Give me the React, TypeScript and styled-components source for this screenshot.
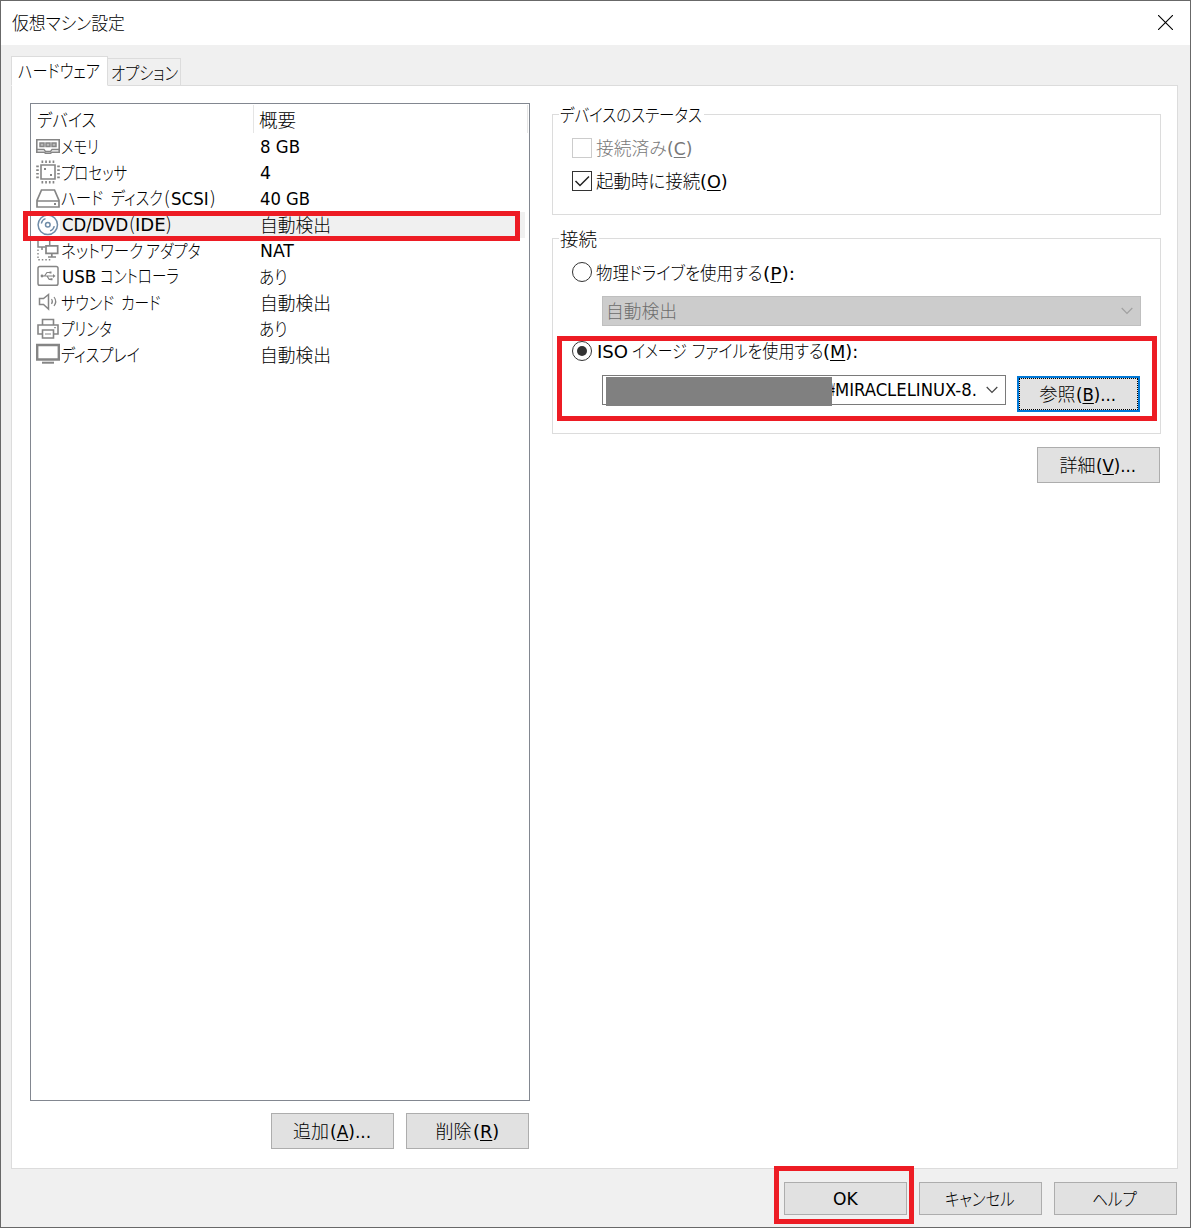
import React, { ReactNode, useLayoutEffect, useRef, useState } from 'react';
import styled, { createGlobalStyle } from 'styled-components';

const Global = createGlobalStyle`
  * { box-sizing: border-box; }
  html, body { margin: 0; padding: 0; background: #fff; }
`;

const JA = `'Noto Sans CJK JP', sans-serif`;
const LATIN = `'DejaVu Sans Condensed', 'DejaVu Sans', 'Noto Sans CJK JP', sans-serif`;

/* ---------- text ---------- */
const FitBox = styled.span<{ $w: number; $x: number; $latin?: boolean; $size?: number }>`
  display: inline-block;
  flex: none;
  width: ${p => p.$w}px;
  margin-left: ${p => p.$x}px;
  white-space: pre;
  font-family: ${p => (p.$latin ? LATIN : JA)};
  font-weight: ${p => (p.$latin ? 400 : 300)};
  font-size: ${p => p.$size ?? (p.$latin ? 17.5 : 18)}px;
  font-feature-settings: 'palt' 1;
`;
const FitInner = styled.span`
  display: inline-block;
  transform-origin: 0 50%;
  u { text-decoration-thickness: 1px; text-underline-offset: 2px; text-decoration-skip-ink: none; }
`;

type RunProps = { w: number; x?: number; latin?: boolean; size?: number; children: ReactNode };

/* One run of text, condensed or widened to the given advance. */
function Run({ w, x = 0, latin, size, children }: RunProps) {
  const ref = useRef<HTMLSpanElement>(null);
  const [scale, setScale] = useState(1);
  useLayoutEffect(() => {
    if (ref.current) setScale(w / ref.current.offsetWidth);
  }, [w, children]);
  return (
    <FitBox $w={w} $x={x} $latin={latin} $size={size}>
      <FitInner ref={ref} style={{ transform: `scaleX(${scale})` }}>{children}</FitInner>
    </FitBox>
  );
}

const Line = styled.span<{ $h: number; $up?: number }>`
  display: flex;
  align-items: baseline;
  height: ${p => p.$h}px;
  line-height: ${p => p.$h}px;
  transform: translateY(${p => -(p.$up ?? 1)}px);
`;

/* ---------- window ---------- */
const Window = styled.div`
  position: relative;
  display: flex;
  flex-direction: column;
  width: 1191px;
  height: 1228px;
  border: 1px solid #686868;
  background: #f0f0f0;
  color: #000;
  overflow: hidden;
`;
const TitleBar = styled.header`
  display: flex;
  justify-content: space-between;
  align-items: center;
  height: 44px;
  padding: 0 17px 0 11px;
  background: #fff;
`;
const CloseIcon = styled.svg`
  width: 15px;
  height: 15px;
  margin-bottom: 1px;
  stroke: #000;
  stroke-width: 1.1;
`;
const Tabs = styled.nav`
  display: flex;
  align-items: flex-end;
  height: 41px;
  padding-left: 10px;
  margin-bottom: -1px;
`;
const Tab = styled.div<{ $active?: boolean; $w: number }>`
  position: relative;
  z-index: ${p => (p.$active ? 1 : 0)};
  width: ${p => p.$w}px;
  height: ${p => (p.$active ? 30 : 28)}px;
  padding: ${p => (p.$active ? '0 0 0 6px' : '0 0 0 3px')};
  border: 1px solid #dcdcdc;
  border-bottom-color: ${p => (p.$active ? '#fff' : '#dcdcdc')};
  border-left-width: ${p => (p.$active ? 1 : 0)}px;
  background: ${p => (p.$active ? '#fff' : '#f0f0f0')};
`;
const Page = styled.main`
  display: flex;
  gap: 22px;
  width: 1167px;
  height: 1084px;
  margin-left: 10px;
  padding: 17px 16px 0 18px;
  border: 1px solid #dcdcdc;
  background: #fff;
`;
const Left = styled.section`
  width: 500px;
`;
const List = styled.div`
  height: 998px;
  border: 1px solid #828790;
`;
const HeaderRow = styled.div`
  display: grid;
  grid-template-columns: 223px 1fr;
  height: 30px;
  padding: 1px 1px 0 0;
`;
const HeadCell = styled.div<{ $pad: number }>`
  height: 28px;
  padding-left: ${p => p.$pad}px;
  border-right: 1px solid #e5e5e5;
`;
const Row = styled.div`
  display: grid;
  grid-template-columns: 24px 199px 1fr;
  height: 26px;
  padding: 0 4px 0 5px;
`;
const Cell = styled.div<{ $on?: boolean }>`
  height: 26px;
  padding-left: 1px;
  background: ${p => (p.$on ? '#f0f0f0' : 'transparent')};
`;
const Icon = styled.svg`
  display: block;
  width: 24px;
  height: 26px;
  fill: none;
  stroke: #858585;
  stroke-width: 2;
`;
const Buttons = styled.div<{ $top: number; $right?: number }>`
  display: flex;
  justify-content: flex-end;
  gap: 12px;
  margin-top: ${p => p.$top}px;
  padding-right: ${p => p.$right ?? 1}px;
`;
const Button = styled.button<{ $h?: number; $focus?: boolean }>`
  display: flex;
  justify-content: center;
  align-items: center;
  flex: none;
  width: 123px;
  height: ${p => p.$h ?? 36}px;
  padding: 0 2px 0 0;
  border: ${p => (p.$focus ? '2px solid #0078d7' : '1px solid #adadad')};
  outline: ${p => (p.$focus ? '1px dotted #000' : 'none')};
  outline-offset: -3px;
  background: #e1e1e1;
  color: #000;
`;
const Right = styled.section`
  width: 609px;
`;
const Group = styled.section<{ $h: number; $top: number }>`
  height: ${p => p.$h}px;
  margin-top: ${p => p.$top}px;
  border: 1px solid #dcdcdc;
`;
const Legend = styled.div<{ $w: number }>`
  width: ${p => p.$w}px;
  height: 24px;
  margin: -12px 0 0 6px;
  background: #fff;
`;
const Option = styled.div<{ $top: number; $off?: boolean }>`
  display: flex;
  align-items: center;
  gap: 4px;
  height: 24px;
  margin: ${p => p.$top}px 0 0 19px;
  color: ${p => (p.$off ? '#787878' : '#000')};
`;
const Check = styled.span<{ $off?: boolean }>`
  display: flex;
  width: 20px;
  height: 20px;
  border: 1px solid ${p => (p.$off ? '#ccc' : '#333')};
  background: #fff;
`;
const Radio = styled.span<{ $on?: boolean }>`
  display: flex;
  align-items: center;
  justify-content: center;
  width: 20px;
  height: 20px;
  border: 1px solid #333;
  border-radius: 50%;
  background: #fff;
  &::after {
    content: '';
    width: ${p => (p.$on ? 10 : 0)}px;
    height: ${p => (p.$on ? 10 : 0)}px;
    border-radius: 50%;
    background: #333;
  }
`;
const Combo = styled.div<{ $w: number; $off?: boolean }>`
  display: flex;
  justify-content: space-between;
  align-items: center;
  width: ${p => p.$w}px;
  height: 30px;
  padding: 0 7px 0 3px;
  border: 1px solid ${p => (p.$off ? '#bfbfbf' : '#7a7a7a')};
  background: ${p => (p.$off ? '#ccc' : '#fff')};
  color: ${p => (p.$off ? '#6d6d6d' : '#000')};
`;
const ComboRow = styled.div<{ $top: number }>`
  display: flex;
  gap: 11px;
  height: 37px;
  margin: ${p => p.$top}px 0 0 49px;
`;
const BrowseSlot = styled.div`
  padding-top: 1px;
`;
const PathText = styled.div`
  display: flex;
  width: 372px;
  padding-left: 225px;
  overflow: hidden;
`;
const Mask = styled.div`
  position: absolute;
  left: 605px;
  top: 376px;
  width: 226px;
  height: 29px;
  background: #808080;
`;
const Callout = styled.div<{ $l: number; $t: number; $w: number; $h: number }>`
  position: absolute;
  z-index: 2;
  left: ${p => p.$l - 1}px;
  top: ${p => p.$t - 1}px;
  width: ${p => p.$w}px;
  height: ${p => p.$h}px;
  border: 5px solid #ed1c24;
  pointer-events: none;
`;

/* ---------- icons ---------- */
const MemoryIcon = () => (
  <Icon viewBox="0 0 24 26">
    <path d="M.8 5.800h22.400v12.400H16l-1.500 1h-5L8 18.200H.8z" strokeWidth="1.600" />
    <path d="M1 15.500h7l1.500 2h5l1.500-2h7" strokeWidth="1.300" />
    <path d="M4 9h4v3.500H4zM10 9h4v3.500h-4zM16 9h4v3.500h-4z" fill="#bbb" strokeWidth="1.500" />
  </Icon>
);
const CpuIcon = () => (
  <Icon viewBox="0 1 24 26">
    <path d="M5 6h14v14H5z" strokeWidth="1.600" />
    <path d="M5.500 2.700h13M5.500 23.300h13" strokeDasharray="1.700 2" strokeWidth="2.600" />
    <path d="M1.500 6.500v13M22.500 6.500v13" strokeDasharray="1.700 2" strokeWidth="2.600" />
    <path d="M8 9h2v2H8zM14 15h2v2h-2z" fill="#858585" stroke="none" />
  </Icon>
);
const DiskIcon = () => (
  <Icon viewBox="0 1 24 26">
    <path d="M5.500 5h13L23 15.500V22H1v-6.500zM1 16h22" strokeWidth="1.700" />
    <path d="M18 19h2" />
  </Icon>
);
const DiscIcon = () => (
  <Icon viewBox="0 0 24 26" style={{ stroke: '#6f8ca8' }}>
    <circle cx="11.800" cy="12.800" r="9.700" strokeWidth="1.500" />
    <circle cx="11.800" cy="12.800" r="2.300" strokeWidth="1.500" />
    <path d="M5.300 11.500A6.500 6.500 0 0 1 9.500 6.700M18.300 14.100a6.500 6.500 0 0 1-4.200 4.800" strokeWidth="1.400" />
  </Icon>
);
const NetworkIcon = () => (
  <Icon viewBox="0 0 24 26">
    <path d="M2 2v7h7.500M6 9v3M13.700 2v5" strokeWidth="1.500" />
    <path d="M10 7.800h11.700v7.500H10zM15.800 15.500v3M12 19h8" strokeWidth="1.700" />
    <path d="M2 11.500v10.200h13" strokeDasharray="1.500 2" strokeWidth="1.400" />
  </Icon>
);
const UsbIcon = () => (
  <Icon viewBox="0 1 24 26">
    <rect x="2" y="3.500" width="20" height="18.700" rx="1.800" strokeWidth="1.500" />
    <path d="M6 13h12M8.500 13l2.500-3.500h3M11 13l2.200 3.300H15" strokeWidth="1.200" />
    <circle cx="6" cy="13" r="1.400" fill="#858585" stroke="none" />
    <path d="M17 11v4l2.500-2zM13.500 8.500h2v2h-2zM14.500 15.300h2v2h-2z" fill="#858585" stroke="none" />
  </Icon>
);
const SoundIcon = () => (
  <Icon viewBox="0 1 24 26">
    <path d="M3.500 9.500h4l5-4v14.500l-5-4.500h-4z" strokeWidth="1.500" />
    <path d="M15.500 10q1.800 2.500 0 5M18 8q3.500 4.500 0 9" strokeWidth="1.200" />
  </Icon>
);
const PrinterIcon = () => (
  <Icon viewBox="0 0.500 24 26">
    <path d="M6.500 9.500V4h11v5.500M6 18.500H2v-9h20v9h-4" strokeWidth="1.600" />
    <path d="M6.500 14.500h11V22.500h-11z" strokeWidth="1.600" />
    <path d="M9 18.500h6M18 12.200h2" strokeWidth="1" />
  </Icon>
);
const DisplayIcon = () => (
  <Icon viewBox="0 1 24 26">
    <path d="M1.200 4h21.600v14.500H1.200z" strokeWidth="2.400" />
    <path d="M6 21.700h12" strokeWidth="2" />
  </Icon>
);
const Chevron = ({ color }: { color: string }) => (
  <svg width="12" height="8" viewBox="0 0 12 8" fill="none" stroke={color} strokeWidth="1.200">
    <path d="M.7 1 6 6.300 11.300 1" />
  </svg>
);

/* ---------- data ---------- */
const auto = <Run w={71}>自動検出</Run>;
const ari = <Run w={28} x={-1}>あり</Run>;
const devices: { icon: ReactNode; name: ReactNode; info: ReactNode; on?: boolean; plain?: boolean }[] = [
  { icon: <MemoryIcon />, name: <Run w={38}>メモリ</Run>, info: <Run latin w={40}>8 GB</Run>, plain: true },
  { icon: <CpuIcon />, name: <Run w={66}>プロセッサ</Run>, info: <Run latin w={11}>4</Run>, plain: true },
  {
    icon: <DiskIcon />,
    name: <><Run w={42}>ハード</Run><Run w={52} x={8}>ディスク</Run><Run w={6} x={1}>(</Run><Run latin w={38} x={1}>SCSI</Run><Run w={6} x={1}>)</Run></>,
    info: <Run latin w={50}>40 GB</Run>,
    plain: true,
  },
  {
    icon: <DiscIcon />,
    on: true,
    name: <><Run latin w={66} x={1}>CD/DVD</Run><Run w={6} x={1}>(</Run><Run latin w={31}>IDE</Run><Run w={6}>)</Run></>,
    info: auto,
  },
  {
    icon: <NetworkIcon />,
    name: <><Run w={82}>ネットワーク</Run><Run w={55} x={3}>アダプタ</Run></>,
    info: <Run latin w={34}>NAT</Run>,
    plain: true,
  },
  { icon: <UsbIcon />, name: <><Run latin w={34} x={1}>USB</Run><Run w={79} x={4}>コントローラ</Run></>, info: ari },
  { icon: <SoundIcon />, name: <><Run w={53}>サウンド</Run><Run w={40} x={7}>カード</Run></>, info: auto },
  { icon: <PrinterIcon />, name: <Run w={51}>プリンタ</Run>, info: ari },
  { icon: <DisplayIcon />, name: <Run w={79}>ディスプレイ</Run>, info: auto },
];

export default function App() {
  return (
    <Window>
      <Global />
      <TitleBar>
        <Line $h={44}><Run w={113} size={18}>仮想マシン設定</Run></Line>
        <CloseIcon viewBox="0 0 15 15">
          <path d="M0 0l15 15M15 0L0 15" />
        </CloseIcon>
      </TitleBar>
      <Tabs>
        <Tab $active $w={97}><Line $h={30} $up={2}><Run w={82}>ハードウェア</Run></Line></Tab>
        <Tab $w={73}><Line $h={29}><Run w={67}>オプション</Run></Line></Tab>
      </Tabs>
      <Page>
        <Left>
          <List>
            <HeaderRow>
              <HeadCell $pad={6}><Line $h={28} $up={0}><Run w={59}>デバイス</Run></Line></HeadCell>
              <HeadCell $pad={5}><Line $h={28} $up={0}><Run w={37}>概要</Run></Line></HeadCell>
            </HeaderRow>
            {devices.map((d, i) => (
              <Row key={i}>
                {d.icon}
                <Cell $on={d.on}><Line $h={26} $up={i === 2 || i === 3 || i === 5 ? 2 : 1}>{d.name}</Line></Cell>
                <Cell $on={d.on}><Line $h={26} $up={d.plain ? 0 : 1}>{d.info}</Line></Cell>
              </Row>
            ))}
          </List>
          <Buttons $top={12}>
            <Button><Line $h={34}><Run w={36}>追加</Run><Run latin w={41}>(<u>A</u>)...</Run></Line></Button>
            <Button><Line $h={34}><Run w={36}>削除</Run><Run latin w={26}>(<u>R</u>)</Run></Line></Button>
          </Buttons>
        </Left>
        <Right>
          <Group $h={101} $top={11}>
            <Legend $w={145}><Line $h={24}><Run w={142} x={1}>デバイスのステータス</Run></Line></Legend>
            <Option $top={9} $off>
              <Check $off />
              <Line $h={24}><Run w={71}>接続済み</Run><Run latin w={25}>(<u>C</u>)</Run></Line>
            </Option>
            <Option $top={9}>
              <Check>
                <svg width="18" height="18" viewBox="0 0 18 18" fill="none" stroke="#222" strokeWidth="1.500">
                  <path d="M2.500 9l4.500 4.500L16 4.500" />
                </svg>
              </Check>
              <Line $h={24}><Run w={104}>起動時に接続</Run><Run latin w={28}>(<u>O</u>)</Run></Line>
            </Option>
          </Group>
          <Group $h={196} $top={23}>
            <Legend $w={40}><Line $h={24}><Run w={37} x={1}>接続</Run></Line></Legend>
            <Option $top={9}>
              <Radio />
              <Line $h={24} $up={0}><Run w={166}>物理ドライブを使用する</Run><Run latin w={32} x={1}>(<u>P</u>):</Run></Line>
            </Option>
            <ComboRow $top={12}>
              <Combo $w={539} $off><Line $h={30}><Run w={71}>自動検出</Run></Line><Chevron color="#a0a0a0" /></Combo>
            </ComboRow>
            <Option $top={6}>
              <Radio $on />
              <Line $h={24}>
                <Run latin w={31} x={1}>ISO</Run><Run w={55} x={4}>イメージ</Run><Run w={131} x={5}>ファイルを使用する</Run><Run latin w={35}>(<u>M</u>):</Run>
              </Line>
            </Option>
            <ComboRow $top={12}>
              <Combo $w={404}>
                <PathText><Line $h={28} $up={0}><Run latin w={4}>¥</Run><Run latin w={142}>MIRACLELINUX-8.</Run></Line></PathText>
                <Chevron color="#444" />
              </Combo>
              <BrowseSlot>
                <Button $focus><Line $h={34}><Run w={36}>参照</Run><Run latin w={40}>(<u>B</u>)...</Run></Line></Button>
              </BrowseSlot>
            </ComboRow>
          </Group>
          <Buttons $top={13}>
            <Button><Line $h={34}><Run w={36}>詳細</Run><Run latin w={40}>(<u>V</u>)...</Run></Line></Button>
          </Buttons>
        </Right>
      </Page>
      <Buttons $top={13} $right={13}>
        <Button $h={33}><Line $h={32} $up={0}><Run latin w={25}>OK</Run></Line></Button>
        <Button $h={33}><Line $h={32}><Run w={70}>キャンセル</Run></Line></Button>
        <Button $h={33}><Line $h={32}><Run w={45}>ヘルプ</Run></Line></Button>
      </Buttons>
      <Mask />
      <Callout $l={23} $t={211} $w={497} $h={30} />
      <Callout $l={557} $t={336} $w={600} $h={85} />
      <Callout $l={774} $t={1166} $w={140} $h={58} />
    </Window>
  );
}
